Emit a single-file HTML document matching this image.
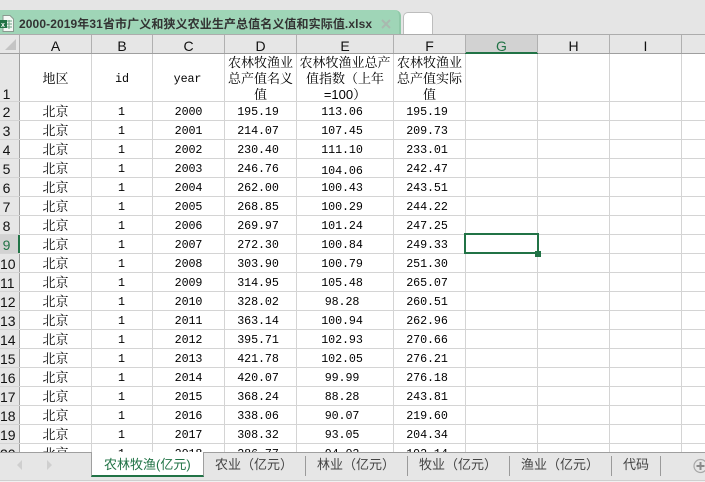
<!DOCTYPE html>
<html><head><meta charset="utf-8">
<style>
html,body{margin:0;padding:0;background:#fff}
body{width:705px;height:482px;overflow:hidden;position:relative;font-family:"Liberation Mono","Noto Serif CJK SC",monospace;color:#000}
.a{position:absolute}
#top{left:0;top:0;width:705px;height:34px;background:#e5e5e5}
#ftab{left:0;top:10px;width:399px;height:24px;background:#9fd5b7;border-top-right-radius:6px;border-right:2px solid #8fc9a8;box-sizing:content-box}
#ftxt{left:19px;top:15px;font:bold 12px/18px "Liberation Sans","Noto Sans CJK SC",sans-serif;letter-spacing:.1px;color:#333;white-space:nowrap}
#wtab{left:403px;top:12px;width:28px;height:22px;background:#fff;border:1px solid #bdbdbd;border-bottom:0;border-radius:5px 5px 0 0}
#hdr{left:0;top:34px;width:705px;background:#e6e6e6;border-top:1px solid #acacac;border-bottom:1px solid #9f9f9f;box-sizing:border-box;height:20px}
.ch{position:absolute;top:35px;height:17px;font:14px/22px "Liberation Sans",sans-serif;text-align:center;color:#111}
.hs{position:absolute;top:35px;width:1px;height:18px;background:#b0b0b0}
#rh{left:0;top:54px;width:19px;height:398px;background:#e6e6e6}
.rn{position:absolute;left:0;width:13px;text-align:center;font:14px/21px "Liberation Sans",sans-serif;color:#111;white-space:nowrap}
.v{position:absolute;top:54px;height:398px;width:1px;background:#d4d4d4}
.h{position:absolute;left:0;width:705px;height:1px;background:#d4d4d4}
.c{position:absolute;height:18px;line-height:20px;text-align:center;font-size:11.7px;letter-spacing:-.1px;white-space:nowrap}
.cj{font-family:"Liberation Sans","Noto Serif CJK SC",serif;font-size:13px;letter-spacing:0}
.hd{position:absolute;top:55px;text-align:center;font-family:"Liberation Sans","Noto Serif CJK SC",serif;font-size:13px;line-height:16px}
#bar{left:0;top:452px;width:705px;height:29px;background:#e6e6e6;border-top:1px solid #9f9f9f;border-bottom:1px solid #cfcfcf;box-sizing:border-box}
#bot{left:0;top:481px;width:705px;height:1px;background:#f1f1f1}
#act{left:91px;top:452px;width:113px;height:25px;background:#fff;border-left:1px solid #9f9f9f;border-right:1px solid #9f9f9f;border-bottom:2px solid #217346;box-sizing:border-box}
.t{position:absolute;top:456px;font:13px/18px "Liberation Sans","Noto Sans CJK SC",sans-serif;color:#444;white-space:nowrap}
.s{position:absolute;top:456px;width:1px;height:20px;background:#9a9a9a}
#sel{left:464px;top:233px;width:75px;height:21px;border:2px solid #217346;box-sizing:border-box}
#hd2{left:535px;top:251px;width:6px;height:6px;background:#217346;border:0}
</style></head><body>
<div class="a" id="top"></div>
<div class="a" id="ftab"></div>
<svg class="a" style="left:0;top:15px" width="14" height="17" viewBox="0 0 14 17"><path d="M3 .5H10L13.5 4V16.5H3Z" fill="#f4f8f5" stroke="#8a9a90"/><path d="M6 6h6M6 9h6M6 12h6M9 5v9" stroke="#6aa584" fill="none"/><rect x="0" y="5" width="7" height="8" fill="#217346"/><text x="1" y="12" font-family="Liberation Sans" font-size="7" font-weight="bold" fill="#fff">x</text></svg>
<div class="a" id="ftxt">2000-2019年31省市广义和狭义农业生产总值名义值和实际值.xlsx</div>
<svg class="a" style="left:381px;top:19px" width="10" height="10"><path d="M1 1L9 9M9 1L1 9" stroke="#a9b9af" stroke-width="2"/></svg>
<div class="a" id="wtab"></div>

<div class="a" id="hdr"></div>
<div class="a" style="left:465px;top:35px;width:72px;height:18px;background:#d2d2d2"></div>
<div class="a" style="left:465px;top:52px;width:73px;height:2px;background:#217346"></div>
<svg class="a" style="left:4px;top:38px" width="13" height="13"><path d="M12 1V12H1Z" fill="#c4c4c4"/></svg>
<div class="hs" style="left:19px"></div><div class="hs" style="left:91px"></div><div class="hs" style="left:152px"></div><div class="hs" style="left:224px"></div><div class="hs" style="left:296px"></div><div class="hs" style="left:393px"></div><div class="hs" style="left:465px"></div><div class="hs" style="left:537px"></div><div class="hs" style="left:609px"></div><div class="hs" style="left:681px"></div>
<div class="ch" style="left:20px;width:71px">A</div><div class="ch" style="left:92px;width:60px">B</div><div class="ch" style="left:153px;width:71px">C</div><div class="ch" style="left:225px;width:71px">D</div><div class="ch" style="left:297px;width:96px">E</div><div class="ch" style="left:394px;width:71px">F</div><div class="ch" style="left:466px;width:71px;color:#217346">G</div><div class="ch" style="left:538px;width:71px">H</div><div class="ch" style="left:610px;width:71px">I</div>

<div class="a" id="rh"></div>
<div class="a" style="left:0;top:235px;width:19px;height:18px;background:#d2d2d2"></div>
<div class="v" style="left:19px;background:#9f9f9f"></div>
<div class="v" style="left:91px"></div><div class="v" style="left:152px"></div><div class="v" style="left:224px"></div><div class="v" style="left:296px"></div><div class="v" style="left:393px"></div><div class="v" style="left:465px"></div><div class="v" style="left:537px"></div><div class="v" style="left:609px"></div><div class="v" style="left:681px"></div>
<div class="a" style="left:18px;top:234px;width:2px;height:19px;background:#217346"></div>

<div class="h" style="top:101px"></div><div class="h" style="top:120px"></div><div class="h" style="top:139px"></div><div class="h" style="top:158px"></div><div class="h" style="top:177px"></div><div class="h" style="top:196px"></div><div class="h" style="top:215px"></div><div class="h" style="top:234px"></div><div class="h" style="top:253px"></div><div class="h" style="top:272px"></div><div class="h" style="top:291px"></div><div class="h" style="top:310px"></div><div class="h" style="top:329px"></div><div class="h" style="top:348px"></div><div class="h" style="top:367px"></div><div class="h" style="top:386px"></div><div class="h" style="top:405px"></div><div class="h" style="top:424px"></div><div class="h" style="top:443px"></div>

<div class="rn" style="top:84px">1</div><div class="rn" style="top:102px">2</div><div class="rn" style="top:121px">3</div><div class="rn" style="top:140px">4</div><div class="rn" style="top:159px">5</div><div class="rn" style="top:178px">6</div><div class="rn" style="top:197px">7</div><div class="rn" style="top:216px">8</div><div class="rn" style="top:235px;color:#217346">9</div><div class="rn" style="top:254px">10</div><div class="rn" style="top:273px">11</div><div class="rn" style="top:292px">12</div><div class="rn" style="top:311px">13</div><div class="rn" style="top:330px">14</div><div class="rn" style="top:349px">15</div><div class="rn" style="top:368px">16</div><div class="rn" style="top:387px">17</div><div class="rn" style="top:406px">18</div><div class="rn" style="top:425px">19</div><div class="rn" style="top:444px">20</div>

<div class="c cj" style="left:20px;width:71px;top:69px">地区</div>
<div class="c" style="left:92px;width:60px;top:69px">id</div>
<div class="c" style="left:153px;width:69px;top:69px">year</div>
<div class="hd" style="left:225px;width:71px">农林牧渔业<br>总产值名义<br>值</div>
<div class="hd" style="left:297px;width:96px">农林牧渔业总产<br>值指数（上年<br>=100）</div>
<div class="hd" style="left:394px;width:71px">农林牧渔业<br>总产值实际<br>值</div>

<div class="c cj" style="left:20px;width:71px;top:102px">北京</div><div class="c" style="left:92px;width:59px;top:102px">1</div><div class="c" style="left:153px;width:71px;top:102px">2000</div><div class="c" style="left:225px;width:66px;top:102px">195.19</div><div class="c" style="left:297px;width:90px;top:102px">113.06</div><div class="c" style="left:394px;width:66px;top:102px">195.19</div>
<div class="c cj" style="left:20px;width:71px;top:121px">北京</div><div class="c" style="left:92px;width:59px;top:121px">1</div><div class="c" style="left:153px;width:71px;top:121px">2001</div><div class="c" style="left:225px;width:66px;top:121px">214.07</div><div class="c" style="left:297px;width:90px;top:121px">107.45</div><div class="c" style="left:394px;width:66px;top:121px">209.73</div>
<div class="c cj" style="left:20px;width:71px;top:140px">北京</div><div class="c" style="left:92px;width:59px;top:140px">1</div><div class="c" style="left:153px;width:71px;top:140px">2002</div><div class="c" style="left:225px;width:66px;top:140px">230.40</div><div class="c" style="left:297px;width:90px;top:140px">111.10</div><div class="c" style="left:394px;width:66px;top:140px">233.01</div>
<div class="c cj" style="left:20px;width:71px;top:159px">北京</div><div class="c" style="left:92px;width:59px;top:159px">1</div><div class="c" style="left:153px;width:71px;top:159px">2003</div><div class="c" style="left:225px;width:66px;top:159px">246.76</div><div class="c" style="left:297px;width:90px;top:161px">104.06</div><div class="c" style="left:394px;width:66px;top:159px">242.47</div>
<div class="c cj" style="left:20px;width:71px;top:178px">北京</div><div class="c" style="left:92px;width:59px;top:178px">1</div><div class="c" style="left:153px;width:71px;top:178px">2004</div><div class="c" style="left:225px;width:66px;top:178px">262.00</div><div class="c" style="left:297px;width:90px;top:178px">100.43</div><div class="c" style="left:394px;width:66px;top:178px">243.51</div>
<div class="c cj" style="left:20px;width:71px;top:197px">北京</div><div class="c" style="left:92px;width:59px;top:197px">1</div><div class="c" style="left:153px;width:71px;top:197px">2005</div><div class="c" style="left:225px;width:66px;top:197px">268.85</div><div class="c" style="left:297px;width:90px;top:197px">100.29</div><div class="c" style="left:394px;width:66px;top:197px">244.22</div>
<div class="c cj" style="left:20px;width:71px;top:216px">北京</div><div class="c" style="left:92px;width:59px;top:216px">1</div><div class="c" style="left:153px;width:71px;top:216px">2006</div><div class="c" style="left:225px;width:66px;top:216px">269.97</div><div class="c" style="left:297px;width:90px;top:216px">101.24</div><div class="c" style="left:394px;width:66px;top:216px">247.25</div>
<div class="c cj" style="left:20px;width:71px;top:235px">北京</div><div class="c" style="left:92px;width:59px;top:235px">1</div><div class="c" style="left:153px;width:71px;top:235px">2007</div><div class="c" style="left:225px;width:66px;top:235px">272.30</div><div class="c" style="left:297px;width:90px;top:235px">100.84</div><div class="c" style="left:394px;width:66px;top:235px">249.33</div>
<div class="c cj" style="left:20px;width:71px;top:254px">北京</div><div class="c" style="left:92px;width:59px;top:254px">1</div><div class="c" style="left:153px;width:71px;top:254px">2008</div><div class="c" style="left:225px;width:66px;top:254px">303.90</div><div class="c" style="left:297px;width:90px;top:254px">100.79</div><div class="c" style="left:394px;width:66px;top:254px">251.30</div>
<div class="c cj" style="left:20px;width:71px;top:273px">北京</div><div class="c" style="left:92px;width:59px;top:273px">1</div><div class="c" style="left:153px;width:71px;top:273px">2009</div><div class="c" style="left:225px;width:66px;top:273px">314.95</div><div class="c" style="left:297px;width:90px;top:273px">105.48</div><div class="c" style="left:394px;width:66px;top:273px">265.07</div>
<div class="c cj" style="left:20px;width:71px;top:292px">北京</div><div class="c" style="left:92px;width:59px;top:292px">1</div><div class="c" style="left:153px;width:71px;top:292px">2010</div><div class="c" style="left:225px;width:66px;top:292px">328.02</div><div class="c" style="left:297px;width:90px;top:292px">98.28</div><div class="c" style="left:394px;width:66px;top:292px">260.51</div>
<div class="c cj" style="left:20px;width:71px;top:311px">北京</div><div class="c" style="left:92px;width:59px;top:311px">1</div><div class="c" style="left:153px;width:71px;top:311px">2011</div><div class="c" style="left:225px;width:66px;top:311px">363.14</div><div class="c" style="left:297px;width:90px;top:311px">100.94</div><div class="c" style="left:394px;width:66px;top:311px">262.96</div>
<div class="c cj" style="left:20px;width:71px;top:330px">北京</div><div class="c" style="left:92px;width:59px;top:330px">1</div><div class="c" style="left:153px;width:71px;top:330px">2012</div><div class="c" style="left:225px;width:66px;top:330px">395.71</div><div class="c" style="left:297px;width:90px;top:330px">102.93</div><div class="c" style="left:394px;width:66px;top:330px">270.66</div>
<div class="c cj" style="left:20px;width:71px;top:349px">北京</div><div class="c" style="left:92px;width:59px;top:349px">1</div><div class="c" style="left:153px;width:71px;top:349px">2013</div><div class="c" style="left:225px;width:66px;top:349px">421.78</div><div class="c" style="left:297px;width:90px;top:349px">102.05</div><div class="c" style="left:394px;width:66px;top:349px">276.21</div>
<div class="c cj" style="left:20px;width:71px;top:368px">北京</div><div class="c" style="left:92px;width:59px;top:368px">1</div><div class="c" style="left:153px;width:71px;top:368px">2014</div><div class="c" style="left:225px;width:66px;top:368px">420.07</div><div class="c" style="left:297px;width:90px;top:368px">99.99</div><div class="c" style="left:394px;width:66px;top:368px">276.18</div>
<div class="c cj" style="left:20px;width:71px;top:387px">北京</div><div class="c" style="left:92px;width:59px;top:387px">1</div><div class="c" style="left:153px;width:71px;top:387px">2015</div><div class="c" style="left:225px;width:66px;top:387px">368.24</div><div class="c" style="left:297px;width:90px;top:387px">88.28</div><div class="c" style="left:394px;width:66px;top:387px">243.81</div>
<div class="c cj" style="left:20px;width:71px;top:406px">北京</div><div class="c" style="left:92px;width:59px;top:406px">1</div><div class="c" style="left:153px;width:71px;top:406px">2016</div><div class="c" style="left:225px;width:66px;top:406px">338.06</div><div class="c" style="left:297px;width:90px;top:406px">90.07</div><div class="c" style="left:394px;width:66px;top:406px">219.60</div>
<div class="c cj" style="left:20px;width:71px;top:425px">北京</div><div class="c" style="left:92px;width:59px;top:425px">1</div><div class="c" style="left:153px;width:71px;top:425px">2017</div><div class="c" style="left:225px;width:66px;top:425px">308.32</div><div class="c" style="left:297px;width:90px;top:425px">93.05</div><div class="c" style="left:394px;width:66px;top:425px">204.34</div>
<div class="c cj" style="left:20px;width:71px;top:444px">北京</div><div class="c" style="left:92px;width:59px;top:444px">1</div><div class="c" style="left:153px;width:71px;top:444px">2018</div><div class="c" style="left:225px;width:66px;top:444px">286.77</div><div class="c" style="left:297px;width:90px;top:444px">94.03</div><div class="c" style="left:394px;width:66px;top:444px">192.14</div>

<div class="a" id="sel"></div><div class="a" id="hd2"></div>

<div class="a" id="bar"></div><div class="a" id="bot"></div>
<svg class="a" style="left:16px;top:459px" width="40" height="12"><path d="M6 1V11L1 6Z M31 1V11L36 6Z" fill="#cfcfcf"/></svg>
<div class="a" id="act"></div>
<div class="t" style="left:104px;color:#217346">农林牧渔(亿元)</div>
<div class="t" style="left:215px">农业（亿元）</div><div class="s" style="left:305px"></div>
<div class="t" style="left:317px">林业（亿元）</div><div class="s" style="left:407px"></div>
<div class="t" style="left:419px">牧业（亿元）</div><div class="s" style="left:509px"></div>
<div class="t" style="left:521px">渔业（亿元）</div><div class="s" style="left:611px"></div>
<div class="t" style="left:623px">代码</div><div class="s" style="left:660px"></div>
<svg class="a" style="left:693px;top:458px" width="12" height="16"><circle cx="7.500" cy="8" r="6.500" fill="none" stroke="#a8a8a8" stroke-width="1.200"/><path d="M3.500 8H11.500M7.500 4V12" stroke="#8a8a8a" stroke-width="2"/></svg>
</body></html>
